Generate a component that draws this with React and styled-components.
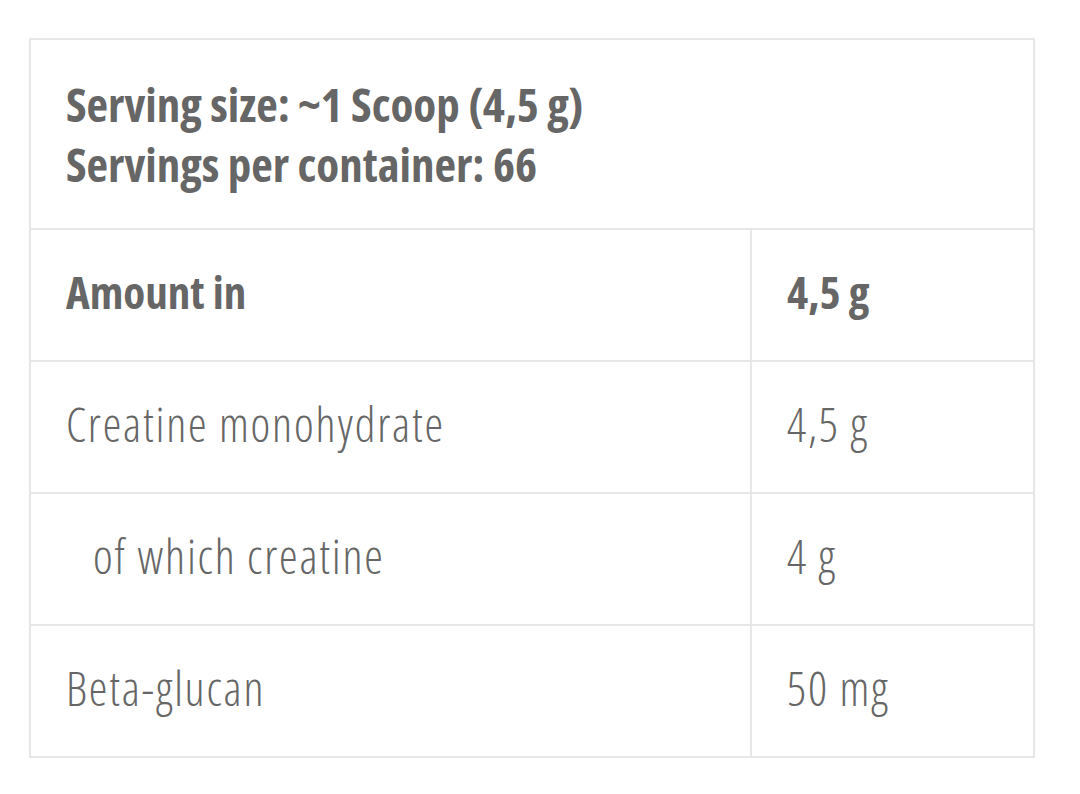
import React from 'react';
import styled, { createGlobalStyle } from 'styled-components';

const GlobalStyle = createGlobalStyle`
  html, body { margin: 0; padding: 0; background: #ffffff; }
  body {
    font-family: "Open Sans", "Noto Sans", sans-serif;
    color: #666666;
  }
`;

const Page = styled.div`
  padding: 38px 0 0 29px;
`;

const Table = styled.table`
  width: 1006px;
  border-collapse: collapse;
  table-layout: fixed;
  border: 2px solid #e7e7e7;
`;

const Cell = styled.td`
  border: 2px solid #e7e7e7;
  padding: 0 0 6px ${p => (p.$indent ? 62 : 35)}px;
  height: 124px;
  vertical-align: middle;
  font-family: "Open Sans", sans-serif;
  font-stretch: 75%;
  font-weight: ${p => (p.$bold ? 700 : 300)};
  font-size: ${p => (p.$bold ? 45 : 47)}px;
  letter-spacing: ${p => (p.$bold ? 0 : 1.8)}px;
  line-height: 56px;
  color: #666666;
  white-space: nowrap;
`;

const HeadCell = styled.th`
  border: 2px solid #e7e7e7;
  padding: 34px 0 34px 35px;
  text-align: left;
  font-family: "Open Sans", sans-serif;
  font-stretch: 75%;
  font-weight: 700;
  font-size: 47px;
  line-height: 60px;
  color: #666666;
`;

const Line = styled.div`
  white-space: nowrap;
`;

const rows = [
  { name: 'Amount in', value: '4,5 g', bold: true },
  { name: 'Creatine monohydrate', value: '4,5 g' },
  { name: 'of which creatine', value: '4 g', indent: true },
  { name: 'Beta-glucan', value: '50 mg' },
];

export default function App() {
  return (
    <>
      <GlobalStyle />
      <Page>
        <Table>
          <colgroup>
            <col style={{ width: '721px' }} />
            <col />
          </colgroup>
          <thead>
            <tr>
              <HeadCell colSpan={2}>
                <Line>Serving size: ~1 Scoop (4,5 g)</Line>
                <Line>Servings per container: 66</Line>
              </HeadCell>
            </tr>
          </thead>
          <tbody>
            {rows.map(r => (
              <tr key={r.name}>
                <Cell $bold={r.bold} $indent={r.indent}>{r.name}</Cell>
                <Cell $bold={r.bold}>{r.value}</Cell>
              </tr>
            ))}
          </tbody>
        </Table>
      </Page>
    </>
  );
}
